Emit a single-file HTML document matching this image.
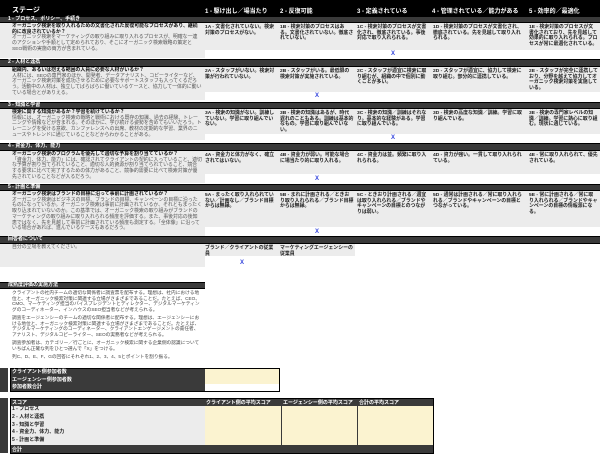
<!DOCTYPE html>
<html><head><meta charset="utf-8"><style>
*{margin:0;padding:0;box-sizing:border-box}
body{width:600px;height:459px;background:#fff;position:relative;overflow:hidden;font-family:"Liberation Sans","Noto Sans CJK JP",sans-serif;color:#222}
.a{position:absolute}
.hdr{background:#000;color:#fff;font-weight:bold;font-size:7px}
.bar{background:#3a3a3a;border-top:1px solid #000;border-bottom:1px solid #000;color:#fff;font-weight:bold;font-size:5px;padding-left:8px;z-index:5}
.bar i{position:absolute;left:8px;top:-1px;font-style:normal;line-height:7px}
.g{background:#ececec}
.q{font-size:4.9px;line-height:5.7px;padding-left:12px;padding-right:3px;overflow:hidden;padding-top:1px}
.q b{color:#111}
.q span{color:#555}
.c{font-size:4.9px;line-height:5.6px;font-weight:bold;color:#222;padding:2px 2px 0;overflow:hidden}
.x{color:#3344dd;font-size:6px;font-weight:bold}
.y{background:#fbf3d0}
.t{font-size:4.7px;line-height:5.6px;color:#444;overflow:hidden}
</style></head><body>
<div class="a hdr" style="left:0;top:0;width:600px;height:17px"></div>
<div class="a" style="left:12px;top:5px;color:#fff;font-weight:bold;font-size:7px">ステージ</div>
<div class="a" style="left:205px;top:6px;color:#fff;font-weight:bold;font-size:6px">1 - 駆け出し／場当たり</div>
<div class="a" style="left:280px;top:6px;color:#fff;font-weight:bold;font-size:6px">2 - 反復可能</div>
<div class="a" style="left:357px;top:6px;color:#fff;font-weight:bold;font-size:6px">3 - 定義されている</div>
<div class="a" style="left:432px;top:6px;color:#fff;font-weight:bold;font-size:6px">4 - 管理されている／能力がある</div>
<div class="a" style="left:529px;top:6px;color:#fff;font-weight:bold;font-size:6px">5 - 効率的／最適化</div>

<!-- row1 -->
<div class="a bar" style="left:0;top:16px;width:600px;height:7px"><i>1 - プロセス、ポリシー、手続き</i></div>
<div class="a g" style="left:0;top:23px;width:600px;height:27px"></div>
<div class="a g" style="left:0;top:50px;width:205px;height:8px"></div>
<div class="a q" style="left:0;top:23px;width:205px;height:35px"><b>オーガニック検索を取り入れるための文書化された反復可能なプロセスがあり、継続的に改良されているか？</b><br><span>オーガニック検索をマーケティングの取り組みに取り入れるプロセスが、明確な一連のアクションや手順として定められており、そこにオーガニック検索戦略の策定とSEO戦術の実施の両方が含まれている。</span></div>
<div class="a c" style="left:203px;top:23px;width:76px;height:27px">1A - 文書化されていない。検索対策のプロセスがない。</div>
<div class="a c" style="left:278px;top:23px;width:78px;height:27px">1B - 検索対策のプロセスはある。文書化されていない。徹底されていない。</div>
<div class="a c" style="left:355px;top:23px;width:77px;height:27px">1C - 検索対策のプロセスが文書化され、徹底されている。事後対応で取り入れられる。</div>
<div class="a c" style="left:431px;top:23px;width:96px;height:27px">1D - 検索対策のプロセスが文書化され、徹底されている。先を見越して取り入れられる。</div>
<div class="a c" style="left:527px;top:23px;width:73px;height:27px">1E - 検索対策のプロセスが文書化されており、先を見越して効果的に取り入れられる。プロセスが常に最適化されている。</div>
<div class="a x" style="left:391px;top:51px">X</div>

<!-- row2 -->
<div class="a bar" style="left:0;top:59px;width:600px;height:8px"><i>2 - 人材と連携</i></div>
<div class="a g" style="left:0;top:67px;width:600px;height:25px"></div>
<div class="a g" style="left:0;top:92px;width:205px;height:8px"></div>
<div class="a q" style="left:0;top:67px;width:205px;height:33px"><b>組織内、あるいは抱える範囲の人員に必要な人材がいるか？</b><br><span>人材には、SEOの専門家のほか、開発者、データアナリスト、コピーライターなど、オーガニック検索対策を成功させるために必要なサポートスタッフも入ってくるだろう。活動中の人材は、独立してばらばらに働いているケースと、協力して一体的に動いている場合とがありえる。</span></div>
<div class="a c" style="left:203px;top:67px;width:76px;height:25px">2A - スタッフがいない。検索対策が行われていない。</div>
<div class="a c" style="left:278px;top:67px;width:78px;height:25px">2B - スタッフがいる。最低限の検索対策が実施されている。</div>
<div class="a c" style="left:355px;top:67px;width:77px;height:25px">2C - スタッフが適宜に検索に取り組むが、組織の中で個別に動くことが多い。</div>
<div class="a c" style="left:431px;top:67px;width:96px;height:25px">2D - スタッフが適宜に、協力して検索に取り組む。部分的に連携している。</div>
<div class="a c" style="left:527px;top:67px;width:73px;height:25px">2E - スタッフが完全に連携しており、分野を越えて協力してオーガニック検索対策を実施している。</div>
<div class="a x" style="left:315px;top:93px">X</div>

<!-- row3 -->
<div class="a bar" style="left:0;top:102px;width:600px;height:7px"><i>3 - 知識と学習</i></div>
<div class="a g" style="left:0;top:109px;width:600px;height:25px"></div>
<div class="a g" style="left:0;top:134px;width:205px;height:6px"></div>
<div class="a q" style="left:0;top:109px;width:205px;height:31px"><b>検索に関する知識があるか？学習を続けているか？</b><br><span>情報には、オーガニック検索の戦略と戦術における既存の知識、過去の経験、トレーニングや情報などが含まれる。そのほかに、学び続ける姿勢を含めてもいいだろう。トレーニングを受ける意欲、カンファレンスへの出席、教材の定期的な学習、業界のニュースやトレンドに通じていることなどからわかることがある。</span></div>
<div class="a c" style="left:203px;top:109px;width:76px;height:25px">3A - 検索の知識がない。訓練していない。学習に取り組んでいない。</div>
<div class="a c" style="left:278px;top:109px;width:78px;height:25px">3B - 検索の知識はあるが、時代遅れのこともある。訓練は基本的なもの。学習に取り組んでいない。</div>
<div class="a c" style="left:355px;top:109px;width:77px;height:25px">3C - 検索の知識／訓練はそれなり。基本的な経験がある。学習に取り組んでいる。</div>
<div class="a c" style="left:431px;top:109px;width:96px;height:25px">3D - 検索の高度な知識／訓練。学習に取り組んでいる。</div>
<div class="a c" style="left:527px;top:109px;width:73px;height:25px">3E - 検索の専門家レベルの知識／訓練。学習に熱心に取り組む。現状に通じている。</div>
<div class="a x" style="left:391px;top:135px">X</div>

<!-- row4 -->
<div class="a bar" style="left:0;top:143px;width:600px;height:8px"><i>4 - 資金力、体力、能力</i></div>
<div class="a g" style="left:0;top:151px;width:600px;height:23px"></div>
<div class="a g" style="left:0;top:174px;width:205px;height:9px"></div>
<div class="a q" style="left:0;top:151px;width:205px;height:32px"><b>オーガニック検索のプログラムを優先して適切な予算を割り当てているか？</b><br><span>「資金力、体力、能力」には、確認されてクライアントの契約に入っていること、適切な予算が割り当てられていること、適切な人的資源が割り当てられていること、競合する要求に比べて完了するための体力があること、競争的需要に比べて検索対策が優先されていることなどが入るだろう。</span></div>
<div class="a c" style="left:203px;top:151px;width:76px;height:23px">4A - 資金力と体力がなく、確立されてはいない。</div>
<div class="a c" style="left:278px;top:151px;width:78px;height:23px">4B - 資金力が弱い。可能な場合に場当たり的に取り入れる。</div>
<div class="a c" style="left:355px;top:151px;width:77px;height:23px">4C - 資金力は並。頻繁に取り入れられる。</div>
<div class="a c" style="left:431px;top:151px;width:96px;height:23px">4D - 資力が強い。一貫して取り入れられている。</div>
<div class="a c" style="left:527px;top:151px;width:73px;height:23px">4E - 常に取り入れられて、優先されている。</div>
<div class="a x" style="left:315px;top:176px">X</div>

<!-- row5 -->
<div class="a bar" style="left:0;top:184px;width:600px;height:7px"><i>5 - 計画と準備</i></div>
<div class="a g" style="left:0;top:191px;width:600px;height:36px"></div>
<div class="a g" style="left:0;top:227px;width:205px;height:9px"></div>
<div class="a q" style="left:0;top:191px;width:205px;height:45px"><b>オーガニック検索はブランドの目標に沿って事前に計画されているか？</b><br><span>オーガニック検索はビジネスの目標、ブランドの目標、キャンペーンの目標に沿ったものになっているか。オーガニック検索は事前に計画されているか、それともまったく取り込まれていないのか。この基準では、オーガニック検索の取り組みがブランドのマーケティングの取り組みに取り入れられる頻度を評価する。また、事後対応の後知恵ではなく、先を見越して事前に計画されている頻度も測定する。「全体像」に沿っている場合があれば、進んでいるケースもあるだろう。</span></div>
<div class="a c" style="left:203px;top:191px;width:76px;height:36px">5A - まったく取り入れられていない／計画なし／ブランド目標からは無縁。</div>
<div class="a c" style="left:278px;top:191px;width:78px;height:36px">5B - まれに計画される／ときおり取り入れられる／ブランド目標からは無縁。</div>
<div class="a c" style="left:355px;top:191px;width:77px;height:36px">5C - ときおり計画される／適宜は取り入れられる／ブランドやキャンペーンの目標とのつながりは弱い。</div>
<div class="a c" style="left:431px;top:191px;width:96px;height:36px">5D - 通常は計画される／常に取り入れられる／ブランドやキャンペーンの目標とつながっている。</div>
<div class="a c" style="left:527px;top:191px;width:73px;height:36px">5E - 常に計画される／常に取り入れられる／ブランドやキャンペーンの目標の情報源になる。</div>
<div class="a x" style="left:315px;top:229px">X</div>

<!-- respondent -->
<div class="a bar" style="left:0;top:236px;width:600px;height:8px"><i>回答者について</i></div>
<div class="a g" style="left:0;top:244px;width:205px;height:23px"></div>
<div class="a g" style="left:205px;top:244px;width:150px;height:12px"></div>
<div class="a q" style="left:0;top:244px;width:205px;height:20px"><span>自分の立場を教えてください。</span></div>
<div class="a c" style="left:203px;top:244px;width:76px;height:12px">ブランド／クライアントの従業員</div>
<div class="a c" style="left:278px;top:244px;width:78px;height:12px">マーケティングエージェンシーの従業員</div>
<div class="a x" style="left:240px;top:260px">X</div>

<!-- method -->
<div class="a bar" style="left:0;top:282px;width:205px;height:7px"><i>成熟度評価の実施方法</i></div>
<div class="a t" style="left:12px;top:290px;width:190px;height:23px">クライアントの社内チームの適切な関係者に調査票を配布する。理想は、社内における地位と、オーガニック検索対策に関連する立場がさまざまであることだ。たとえば、CEO、CMO、マーケティング担当のバイスプレジデントとディレクター、デジタルマーケティングのコーディネーター、インハウスのSEO担当者などが考えられる。</div>
<div class="a t" style="left:12px;top:315px;width:190px;height:23px">調査をエージェンシーのチームの適切な関係者に配布する。理想は、エージェンシーにおける地位と、オーガニック検索対策に関連する立場がさまざまであることだ。たとえば、デジタルマーケティングのコーディネーター、クライアントエンゲージメントの責任者、アナリスト、デジタルコピーライター、SEOの実務者などが考えられる。</div>
<div class="a t" style="left:12px;top:340px;width:190px;height:12px">調査参加者は、カテゴリー／行ごとに、オーガニック検索に関する企業側の認識についていちばん正確な列をひとつ選んで「X」をつける。</div>
<div class="a t" style="left:12px;top:354px;width:190px;height:6px">列C、D、E、F、Gの回答にそれぞれ1、2、3、4、5とポイントを割り振る。</div>

<!-- box1 -->
<div class="a" style="left:0;top:368px;width:8px;height:24px;background:#3a3a3a"></div>
<div class="a" style="left:10px;top:368px;width:270px;height:24px;border:1px solid #000;background:#3a3a3a"></div>
<div class="a y" style="left:205px;top:369px;width:74px;height:15px"></div>
<div class="a" style="left:205px;top:384px;width:74px;height:7px;background:#fff"></div>
<div class="a" style="left:12px;top:369px;color:#fff;font-weight:bold;font-size:5px;line-height:7.5px">クライアント側参加者数<br>エージェンシー側参加者数<br>参加者数合計</div>

<!-- box2 -->
<div class="a" style="left:0;top:398px;width:8px;height:55px;background:#3a3a3a"></div>
<div class="a" style="left:10px;top:398px;width:424px;height:56px;border:1px solid #000;background:#3a3a3a"></div>
<div class="a g" style="left:11px;top:406px;width:194px;height:39px"></div>
<div class="a y" style="left:205px;top:406px;width:76px;height:39px"></div>
<div class="a y" style="left:282px;top:406px;width:75px;height:39px"></div>
<div class="a y" style="left:358px;top:406px;width:75px;height:39px"></div>
<div class="a" style="left:12px;top:399px;color:#fff;font-weight:bold;font-size:5px">スコア</div>
<div class="a" style="left:206px;top:399px;color:#fff;font-weight:bold;font-size:5px">クライアント側の平均スコア</div>
<div class="a" style="left:283px;top:399px;color:#fff;font-weight:bold;font-size:5px">エージェンシー側の平均スコア</div>
<div class="a" style="left:359px;top:399px;color:#fff;font-weight:bold;font-size:5px">合計の平均スコア</div>
<div class="a" style="left:12px;top:406px;color:#222;font-weight:bold;font-size:5px;line-height:7.8px">1 - プロセス<br>2 - 人材と連携<br>3 - 知識と学習<br>4 - 資金力、体力、能力<br>5 - 計画と準備</div>
<div class="a" style="left:12px;top:446px;color:#fff;font-weight:bold;font-size:5px">合計</div>
</body></html>
